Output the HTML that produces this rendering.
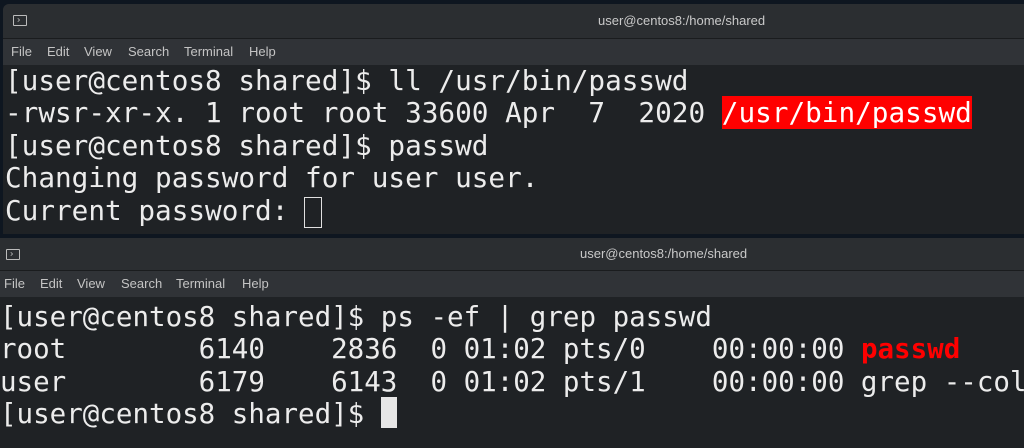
<!DOCTYPE html>
<html><head><style>
body{margin:0;width:1024px;height:448px;background:#0e1620;overflow:hidden;position:relative;font-family:"Liberation Sans",sans-serif}
.win{position:absolute;background:#1f2225;overflow:hidden}
.tb{position:absolute;left:0;right:0;top:0;height:34px;background:#2b2e31;border-bottom:1px solid #1a1c1e}
.title{position:absolute;top:9px;font-size:13px;color:#c9c9c9;}
.ico{position:absolute;left:10px;top:11px;width:12px;height:9px;border:1px solid #bbb;border-radius:1px}
.ico:after{content:"";position:absolute;left:2px;top:2px;width:3px;height:3px;border-right:1px solid #bbb;border-bottom:1px solid #bbb;transform:rotate(-45deg) scale(.7)}
.mb{position:absolute;left:0;right:0;top:35px;height:26px;background:#303337}
.mb span{position:absolute;top:5px;font-size:13px;color:#c4c4c4}
pre{position:absolute;margin:0;font-family:"DejaVu Sans Mono","Liberation Mono",monospace;font-size:27.7px;line-height:32.4px;color:#ececec;letter-spacing:0}
.red{background:#f00;color:#fff}
.rt{color:#f00;font-weight:bold}
</style></head><body>
<div class="win" style="left:3px;top:4px;width:1030px;height:230px;border-radius:6px 6px 0 0">
 <div class="tb"><div class="ico"></div><div class="title" style="left:595px">user@centos8:/home/shared</div></div>
 <div class="mb"><span style="left:8px">File</span><span style="left:44px">Edit</span><span style="left:81px">View</span><span style="left:125px">Search</span><span style="left:181px">Terminal</span><span style="left:246px">Help</span></div>
 <pre style="left:2px;top:61px">[user@centos8 shared]$ ll /usr/bin/passwd
-rwsr-xr-x. 1 root root 33600 Apr  7  2020 <span class="red">/usr/bin/passwd</span>
[user@centos8 shared]$ passwd
Changing password for user user.
Current password: </pre>
 <div style="position:absolute;left:301px;top:193px;width:16px;height:29px;border:1px solid #e0e0e0"></div>
</div>
<div class="win" style="left:0;top:238px;width:1024px;height:210px">
 <div class="tb" style="height:32px"><div class="ico" style="left:6px"></div><div class="title" style="left:580px;top:8px">user@centos8:/home/shared</div></div>
 <div class="mb" style="top:33px"><span style="left:4px">File</span><span style="left:40px">Edit</span><span style="left:77px">View</span><span style="left:121px">Search</span><span style="left:176px">Terminal</span><span style="left:242px">Help</span></div>
 <pre style="left:0;top:63px;font-size:27.5px">[user@centos8 shared]$ ps -ef | grep passwd
root        6140    2836  0 01:02 pts/0    00:00:00 <span class="rt">passwd</span>
user        6179    6143  0 01:02 pts/1    00:00:00 grep --color=auto passwd
[user@centos8 shared]$ </pre>
 <div style="position:absolute;left:381px;top:159px;width:16px;height:31px;background:#e6e6e6"></div>
</div>
</body></html>
